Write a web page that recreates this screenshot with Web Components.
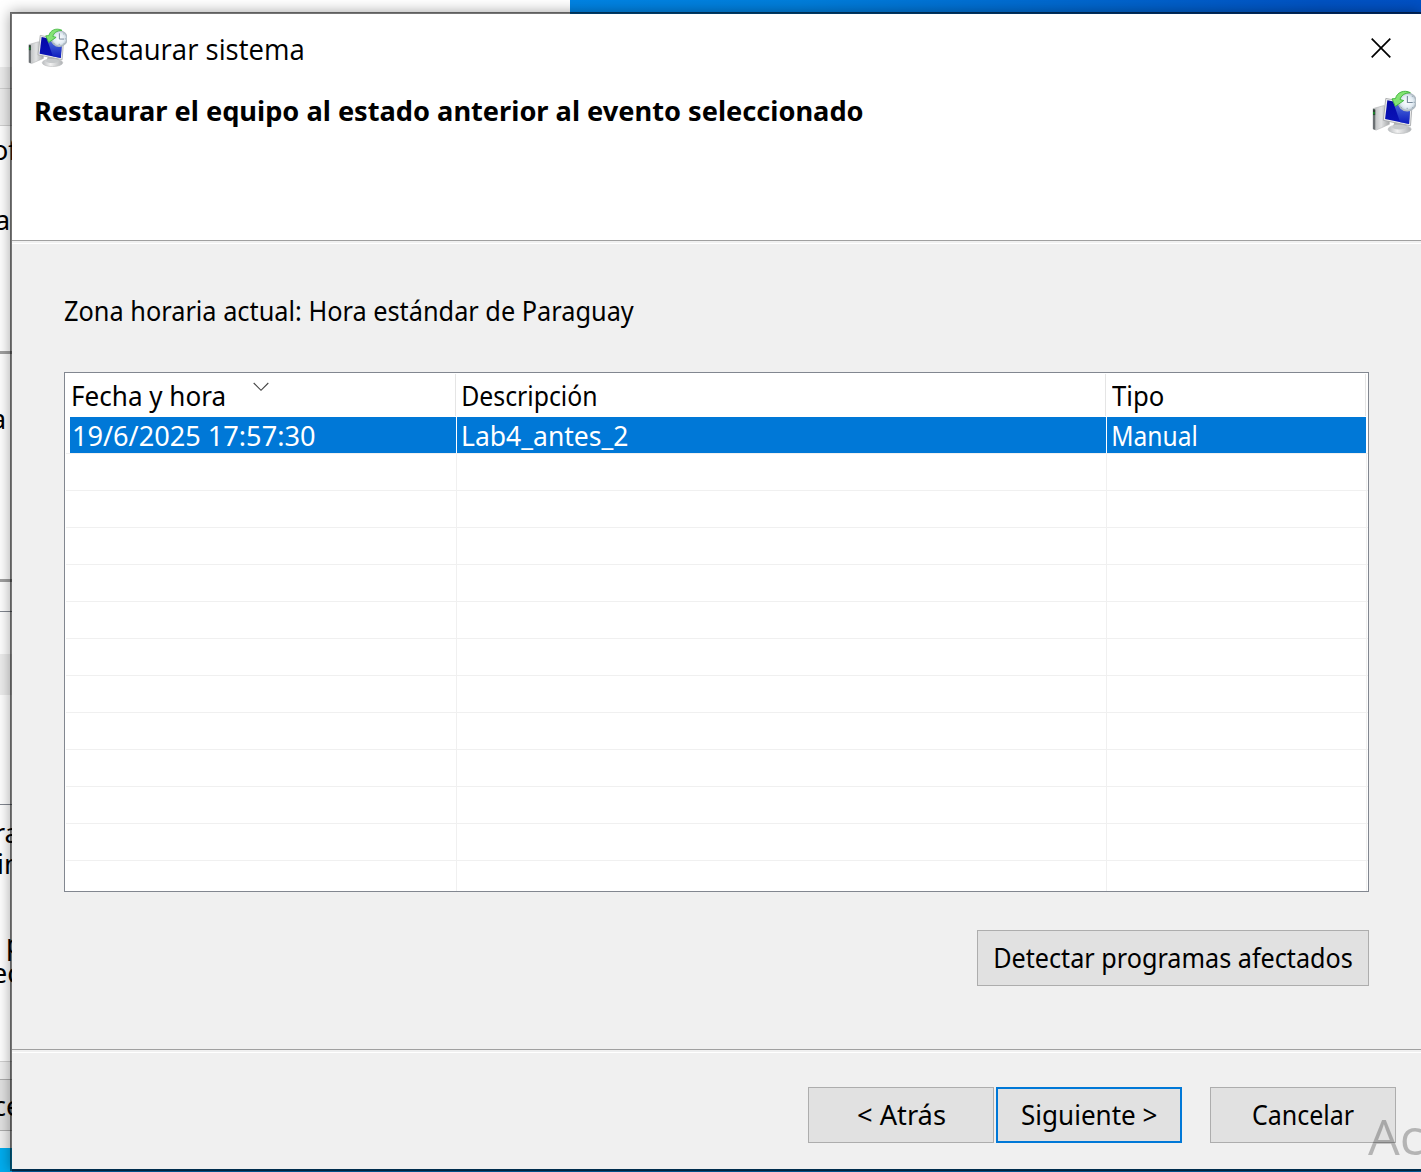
<!DOCTYPE html>
<html lang="es"><head><meta charset="utf-8"><title>Restaurar sistema</title>
<style>html,body{margin:0;height:100%;overflow:hidden;background:#fff;font-family:"Noto Sans",sans-serif;color:#000}</style></head>
<body><desktop-screen></desktop-screen>
<script>
const make=(name,html,init)=>customElements.define(name,class extends HTMLElement{
  connectedCallback(){ if(this.shadowRoot)return; this.attachShadow({mode:'open'}).innerHTML=html; if(init)init(this); }
});
// Label whose ink spans exactly the width in its "w" attribute
make('fit-text',`<style>:host{display:block;flex:none;white-space:pre;line-height:36px;height:36px;font-size:27px}span{display:inline-block;transform-origin:0 50%}</style><span><slot></slot></span>`,el=>{
  const w=+el.getAttribute('w'),s=el.shadowRoot.querySelector('span'),cs=getComputedStyle(el),c=document.createElement('canvas').getContext('2d');
  c.font=cs.fontWeight+' '+cs.fontSize+' '+cs.fontFamily;
  const m=c.measureText(el.textContent),l=-m.actualBoundingBoxLeft,k=w/(m.actualBoundingBoxRight+m.actualBoundingBoxLeft);
  el.style.width=w+'px'; s.style.transform=`translateX(${l*-k}px) scaleX(${k})`;
});
make('restore-icon',`<style>:host{display:block;flex:none}svg{display:block;width:100%;height:100%}</style>
<svg viewBox="0 0 43 43"><defs>
<linearGradient id="b" x1="0" y1="0" x2="0" y2="1"><stop offset="0" stop-color="#0408a8"/><stop offset="1" stop-color="#0a14b8"/></linearGradient>
<linearGradient id="h" x1="0" y1="0" x2="0" y2="1"><stop offset="0" stop-color="#8fb0f4"/><stop offset=".45" stop-color="#4f74e4"/><stop offset="1" stop-color="#0d1ec0"/></linearGradient>
<linearGradient id="s" x1="0" x2="1"><stop stop-color="#b9bcbf"/><stop offset=".4" stop-color="#f2f2f2"/><stop offset="1" stop-color="#aeb1b4"/></linearGradient>
<linearGradient id="t" x1="0" x2="1"><stop stop-color="#b5b7b9"/><stop offset=".5" stop-color="#e2e3e4"/><stop offset="1" stop-color="#a4a6a8"/></linearGradient>
<radialGradient id="c"><stop stop-color="#fff"/><stop offset=".65" stop-color="#e4edf4"/><stop offset="1" stop-color="#bccad4"/></radialGradient></defs>
<path d="M1 18.2 11.5 15.2 17 18v15.5L4 39.2 1 38z" fill="url(#t)" stroke="#b3b5b7" stroke-width=".6"/><path d="M1 18.4 3.2 19.4V39L1 38z" fill="#6b7073"/><path d="M1 19h2.1v5.5H1z" fill="#2d4034"/><path d="M1.1 21.5h1.5v2.2H1.1z" fill="#18952b"/>
<path d="M22 31h11l1.5 6.5H20z" fill="#b4b6b8"/><ellipse cx="27" cy="38.3" rx="11.3" ry="4.2" fill="url(#s)" stroke="#bcbec0" stroke-width=".7"/><ellipse cx="26.5" cy="36.4" rx="6.8" ry="2.2" fill="#c6c9cb"/>
<path d="M13.5 8.2 39.3 13.2 37.6 35 11 29.6z" fill="#ececec" stroke="#a9abad" stroke-width=".9"/>
<path d="M15 10 37.6 14.6 36.2 33.2 12.8 28.3z" fill="url(#b)"/><path d="M20.5 11.2 27.5 31.4 36.2 33.2 37.6 14.6z" fill="url(#h)" opacity=".62"/>
<circle cx="34.4" cy="11.6" r="8.7" fill="url(#c)" stroke="#b0bac2" stroke-width="1.5"/>
<path d="M34.6 5.8v6.4h5.2" fill="none" stroke="#788a9c" stroke-width="1.1"/><path d="M34.4 17.4v1.4M27.5 12h1.2M40.6 12H42M29.4 16.6l-.8.8M39.2 16.6l.8.8M39 6.8l.8-.8" stroke="#8ba0b0" stroke-width=".9"/>
<path d="M37.5 2.6C31.5-.6 24.2 2.2 23 8.4L19.6 8.6 22.8 16 31 10.3 27.4 9.3C28.3 5.6 31.5 2.9 37.5 2.6z" fill="#84e374" stroke="#3db53a" stroke-width=".9"/></svg>`);
make('push-button',`<style>:host{display:flex;box-sizing:border-box;height:56px;width:186px;border:1px solid #adadad;background:#e1e1e1;justify-content:center;padding-top:9px;flex:none}:host([primary]){border:2px solid #0078d7;padding-top:8px}</style><slot></slot>`);
make('etched-line',`<style>:host{display:block;flex:none;height:2px;border-top:1px solid #a0a0a0;border-bottom:1px solid #fff}</style>`);
make('restore-table',`<style>
:host{display:flex;flex-direction:column;box-sizing:border-box;height:520px;width:1305px;border:1px solid #828790;background:#fff;flex:none;overflow:hidden}
.row{display:grid;grid-template-columns:391px 649px 259px;column-gap:1px;flex:none}
.head{height:44px;grid-template-columns:390px 649px 259px}.head>div,.sel>div{display:flex}
.head>div{border-right:1px solid #e5e5e5;box-sizing:border-box;margin:1px -1px 1px 0;padding:4px 0 0 8px}
.head>div:nth-child(n+2){padding-left:7px}.head>div:nth-child(3){padding-left:6px}
.sel{height:36px;padding-left:5px;grid-template-columns:386px 649px 259px}.sel>div{background:#0078d7;color:#fff;padding-left:6px}.sel>div:first-child{padding-left:4px}
.sel fit-text{margin-top:1px;height:35px}
.body{flex:1;display:grid;margin-left:1px;grid-template-columns:390px 649px 259px 1px;column-gap:1px;background:linear-gradient(#f0f0f0 0 1px,transparent 1px) 0 0/100% 37px}
.body i{border-right:1px solid #f0f0f0;margin-right:-1px}
svg{width:16px;height:10px;margin:4px 0 0 29px}
</style><div class="row head"><div><fit-text w="151">Fecha y hora</fit-text><svg viewBox="0 0 16 10"><path d="M.7 1 8 8.3 15.3 1" fill="none" stroke="#444" stroke-width="1.1"/></svg></div><div><fit-text w="133">Descripción</fit-text></div><div><fit-text w="51">Tipo</fit-text></div></div>
<div class="row sel"><div><fit-text w="241">19/6/2025 17:57:30</fit-text></div><div><fit-text w="165">Lab4_antes_2</fit-text></div><div><fit-text w="83">Manual</fit-text></div></div>
<div class="body"><i></i><i></i><i></i></div>`);
make('restore-dialog',`<style>
:host{display:flex;flex-direction:column;box-sizing:border-box;border:2px solid rgba(0,0,0,.54);border-right:0;background:#f0f0f0;background-clip:padding-box;box-shadow:0 0 13px rgba(0,0,0,.36)}
.top{height:226px;background:#fff;flex:none}.bar,.sub,.foot{display:flex}
.bar{height:72px;padding-left:16px}.bar restore-icon{width:39px;height:39px;margin:14px 8px 0 0}.bar fit-text{font-family:"Open Sans",sans-serif;font-size:28.5px;margin-top:17px}
.x{width:20px;height:20px;margin:24px 30px 0 auto}
.sub{padding-left:24px}.sub fit-text{font-weight:700;font-size:26.5px;margin-top:7px}.sub restore-icon{width:44px;height:44px;margin:4px 5px 0 auto}
.mid{height:805px;flex:none;padding:49px 52px 0 52px;box-sizing:border-box}.mid>fit-text{margin-left:1px}.mid restore-table{margin-top:43px}
.mid push-button{width:392px;margin:38px 0 0 auto}.foot{padding:34px 25px 0 0;justify-content:flex-end}.foot push-button:nth-child(2){margin:0 28px 0 2px}
</style><div class="top"><div class="bar"><restore-icon></restore-icon><fit-text w="228">Restaurar sistema</fit-text><svg class="x" viewBox="0 0 20 20"><path d="M.7.7l18.6 18.6M19.3.7.7 19.3" stroke="#000" stroke-width="1.7"/></svg></div>
<div class="sub"><fit-text w="827">Restaurar el equipo al estado anterior al evento seleccionado</fit-text><restore-icon></restore-icon></div></div>
<etched-line></etched-line><div class="mid"><fit-text w="569">Zona horaria actual: Hora estándar de Paraguay</fit-text><restore-table></restore-table><push-button><fit-text w="357">Detectar programas afectados</fit-text></push-button></div>
<etched-line></etched-line><div class="foot"><push-button><fit-text w="87">&lt; Atrás</fit-text></push-button><push-button primary><fit-text w="135">Siguiente &gt;</fit-text></push-button><push-button><fit-text w="101">Cancelar</fit-text></push-button></div>`);
// Window behind the dialog: only its right-hand sliver stays visible
make('back-window',`<style>
:host{display:flex;flex-direction:column;width:570px;height:1148px;background:#fff;overflow:hidden;flex:none}
div{flex:none;box-sizing:border-box;overflow:hidden;white-space:pre;font-size:27px;line-height:36px;width:30px}
.g{background:#ededed}.l{border-top:1px solid #d0d0d0}.d{background:#a0a0a0;height:3px}.t{border-top:1px solid #828790}span{display:block}
</style>
<div style="height:67px"></div><div class="g" style="height:21px"></div><div class="g l" style="height:37px"></div>
<div class="l" style="height:226px;padding-top:6px"><span style="margin-left:-8px">of</span><span style="margin:34px 0 0 -5px">ar</span></div>
<div class="d"></div><div style="height:225px;padding-top:47px"><span style="margin-left:-9px">a</span></div>
<div class="d"></div><div style="height:29px"></div><div class="t" style="height:43px"></div><div class="g" style="height:41px"></div><div style="height:109px"></div>
<div class="t" style="height:257px;padding-top:10px"><span style="margin-left:-6px">ra</span><span style="margin:-5px 0 0 -3px">in</span><span style="margin:44px 0 0 6px">p</span><span style="margin:-7px 0 0 -8px">ec</span></div>
<div class="l" style="height:18px;background:#f0f0f0"></div><div style="height:52px;background:#e1e1e1;border:solid #adadad;border-width:1px 0;padding-top:8px"><span style="margin-left:-7px">ce</span></div><div style="height:17px;background:#f0f0f0"></div>`);
make('desktop-screen',`<style>
:host{display:block;position:relative;width:1421px;height:1172px;overflow:hidden;background:linear-gradient(#0000 0 1100px,#00adef 1100px) 0 0/12px 100% no-repeat,linear-gradient(#0000 0 1100px,#0063a8 1100px) 12px 0 no-repeat,linear-gradient(90deg,#0083e3 570px,#007edb 800px,#0052c2 1320px,#0050c4)}
restore-dialog{position:absolute;left:10px;top:12px;width:1411px;height:1159px}
fit-text{position:absolute;left:1368px;top:1102px;font-family:"Open Sans",sans-serif;font-weight:400;font-size:50px;line-height:68px;height:68px;color:rgba(0,0,0,.25)}
</style><back-window></back-window><restore-dialog></restore-dialog><fit-text w="55">Ac</fit-text>`);
</script></body></html>
